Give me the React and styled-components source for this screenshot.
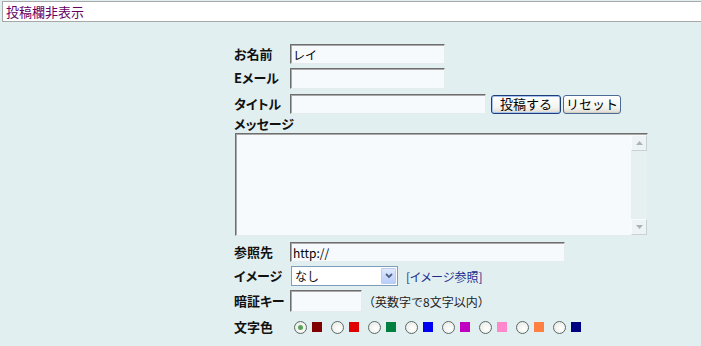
import React from "react";
import styled, { createGlobalStyle } from "styled-components";

const Global = createGlobalStyle`
  html, body { margin: 0; padding: 0; }
  body {
    background: #e1eff0;
    font-family: "Noto Sans CJK JP", "Noto Sans", sans-serif;
    color: #111;
  }
`;

const TopBar = styled.div`
  margin: 1px 0 0 2px;
  height: 19px;
  border: 1px solid #a8a8a8;
  border-right: none;
  background: #fff;
  padding-left: 3px;
  font-size: 13px;
  line-height: 19px;
  color: #660066;
`;

const Form = styled.div`
  margin: 20px 0 0 234px;
  width: 416px;
  display: flex;
  flex-direction: column;
`;

const Row = styled.div`
  display: flex;
  align-items: center;
  height: ${(p) => p.$h || 24}px;
  margin-top: ${(p) => p.$mt || 0}px;
`;

const Label = styled.div`
  width: 56px;
  flex: none;
  font-size: 13px;
  font-weight: bold;
  font-feature-settings: "palt";
  line-height: 16px;
  white-space: nowrap;
`;

const BlockLabel = styled(Label)`
  height: 17px;
  line-height: 16px;
`;

const Field = styled.input`
  box-sizing: border-box;
  width: ${(p) => p.$w}px;
  height: ${(p) => p.$h || 20}px;
  margin: 0;
  padding: 0 2px;
  border: 1px solid;
  border-color: #6e6e6e #e4ecee #e4ecee #6e6e6e;
  box-shadow: inset 1px 1px 0 #a9a9a9;
  background: #f6fafc;
  font-family: "Noto Sans CJK JP", "Noto Sans", sans-serif;
  font-size: 12px;
  color: #000;
  outline: none;
`;

const Btn = styled.button`
  box-sizing: border-box;
  width: ${(p) => p.$w}px;
  height: 19px;
  margin: 0 0 0 ${(p) => p.$ml}px;
  padding: 0;
  border: 1px solid ${(p) => (p.$focus ? "#1d3f78" : "#4b6a96")};
  border-radius: 3px;
  background: linear-gradient(#ffffff, #f3f3ef 70%, #dcd9cf);
  box-shadow: ${(p) =>
    p.$focus ? "inset 0 0 0 1px #a6c1ee" : "inset 0 -1px 0 #d2cfc4"};
  font-family: "Noto Sans CJK JP", "Noto Sans", sans-serif;
  font-size: 13px;
  line-height: 16px;
  color: #000;
`;

const AreaBox = styled.div`
  box-sizing: border-box;
  margin-left: 1px;
  width: 413px;
  height: 103px;
  display: flex;
  border: 1px solid;
  border-color: #6e6e6e #e4ecee #e4ecee #6e6e6e;
  box-shadow: inset 1px 1px 0 #a9a9a9;
  background: #f6fafc;
`;

const Area = styled.textarea`
  flex: 1;
  border: none;
  margin: 1px 0 0 1px;
  padding: 0;
  background: transparent;
  resize: none;
  outline: none;
  font-family: "Noto Sans CJK JP", sans-serif;
  font-size: 12px;
`;

const ScrollTrack = styled.div`
  width: 16px;
  flex: none;
  background: #e6f0f1;
  display: flex;
  flex-direction: column;
  justify-content: space-between;
  margin: 1px 0 0 0;
`;

const ScrollBtn = styled.div`
  height: 16px;
  box-sizing: border-box;
  border: 1px solid;
  border-color: #f8fbfb #c8d2d4 #c8d2d4 #f8fbfb;
  background: #eef4f5;
  display: flex;
  align-items: center;
  justify-content: center;
`;

const SelectBox = styled.div`
  box-sizing: border-box;
  width: 107px;
  height: 20px;
  margin-left: 1px;
  border: 1px solid #7f9db9;
  background: #fff;
  display: flex;
  align-items: center;
`;

const SelectText = styled.span`
  flex: 1;
  padding-left: 3px;
  font-size: 12px;
  line-height: 16px;
`;

const DropBtn = styled.span`
  box-sizing: border-box;
  width: 15px;
  height: 16px;
  margin-right: 1px;
  border: 1px solid #bccdf2;
  border-radius: 1px;
  background: linear-gradient(#dfe8fd, #b8cdf9);
  display: flex;
  align-items: center;
  justify-content: center;
`;

const Link = styled.a`
  margin-left: 8px;
  font-size: 12px;
  color: #1c2a8c;
  text-decoration: none;
  font-feature-settings: "palt";
`;

const Note = styled.span`
  margin-left: 1px;
  font-size: 12px;
  color: #222;
`;

const Swatches = styled.div`
  display: flex;
  align-items: center;
  padding-left: 4px;
`;

const Swatch = styled.div`
  display: flex;
  align-items: center;
  margin-right: 9px;
`;

const Radio = styled.span`
  box-sizing: border-box;
  width: 13px;
  height: 13px;
  border-radius: 50%;
  border: 1px solid #5a6a66;
  background: radial-gradient(circle at 60% 60%, #ffffff, #e6e8e2);
  display: flex;
  align-items: center;
  justify-content: center;
  &::after {
    content: "";
    display: ${(p) => (p.$on ? "block" : "none")};
    width: 5px;
    height: 5px;
    border-radius: 50%;
    background: #5aa35a;
  }
`;

const Chip = styled.span`
  width: 10px;
  height: 10px;
  margin-left: 5px;
  background: ${(p) => p.$c};
`;

const colors = [
  "#800000",
  "#e00000",
  "#008040",
  "#0000f0",
  "#c000c0",
  "#ff88cc",
  "#ff8040",
  "#000080",
];

export default function App() {
  return (
    <>
      <Global />
      <TopBar>投稿欄非表示</TopBar>
      <Form>
        <Row>
          <Label>お名前</Label>
          <Field $w={155} defaultValue="レイ" />
        </Row>
        <Row>
          <Label>Eメール</Label>
          <Field $w={155} $h={21} />
        </Row>
        <Row $mt={2}>
          <Label>タイトル</Label>
          <Field $w={196} />
          <Btn $w={70} $ml={5} $focus>
            投稿する
          </Btn>
          <Btn $w={58} $ml={2}>
            リセット
          </Btn>
        </Row>
        <BlockLabel>メッセージ</BlockLabel>
        <AreaBox>
          <Area />
          <ScrollTrack>
            <ScrollBtn>
              <svg width="7" height="4" viewBox="0 0 7 4">
                <path d="M0 4 L3.5 0 L7 4 Z" fill="#a8b4b6" />
              </svg>
            </ScrollBtn>
            <ScrollBtn>
              <svg width="7" height="4" viewBox="0 0 7 4">
                <path d="M0 0 L3.5 4 L7 0 Z" fill="#a8b4b6" />
              </svg>
            </ScrollBtn>
          </ScrollTrack>
        </AreaBox>
        <Row $mt={4}>
          <Label>参照先</Label>
          <Field $w={275} defaultValue="http://" />
        </Row>
        <Row>
          <Label>イメージ</Label>
          <SelectBox>
            <SelectText>なし</SelectText>
            <DropBtn>
              <svg width="8" height="6" viewBox="0 0 8 6">
                <path
                  d="M1 1 L4 4 L7 1"
                  stroke="#4d6185"
                  strokeWidth="1.8"
                  fill="none"
                />
              </svg>
            </DropBtn>
          </SelectBox>
          <Link href="#">[イメージ参照]</Link>
        </Row>
        <Row $h={26}>
          <Label>暗証キー</Label>
          <Field $w={72} $h={22} />
          <Note>（英数字で8文字以内）</Note>
        </Row>
        <Row $h={26}>
          <Label>文字色</Label>
          <Swatches>
            {colors.map((c, i) => (
              <Swatch key={c}>
                <Radio $on={i === 0} />
                <Chip $c={c} />
              </Swatch>
            ))}
          </Swatches>
        </Row>
      </Form>
    </>
  );
}
